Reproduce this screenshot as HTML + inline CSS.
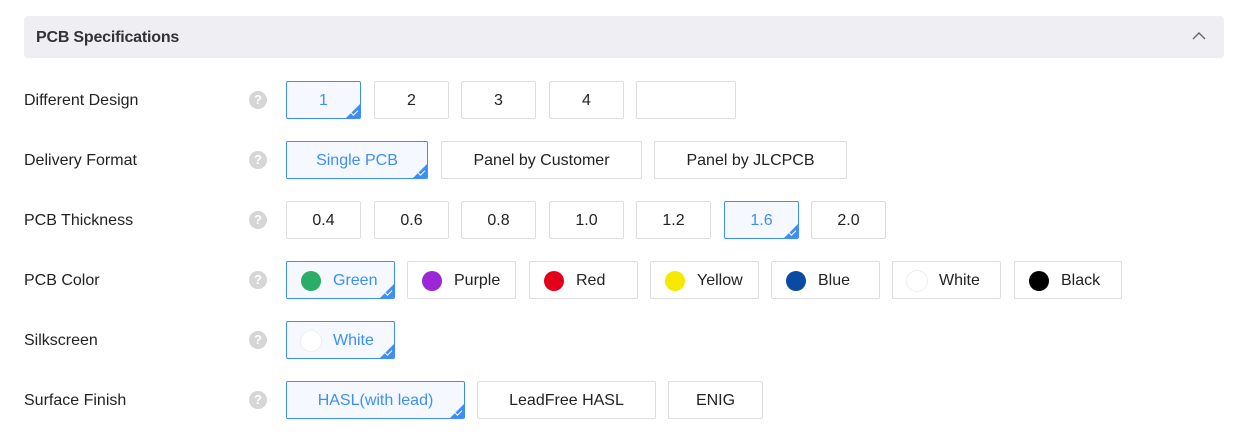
<!DOCTYPE html>
<html><head><meta charset="utf-8"><style>
body{margin:0;width:1246px;height:436px;background:#fff;font-family:"Liberation Sans",Arial,sans-serif;position:relative;overflow:hidden;color:#222}
.hd{position:absolute;left:24px;top:16px;width:1200px;height:42px;background:#eeeef3;border-radius:4px}
.hd span{position:absolute;left:12px;top:13px;font-size:16px;font-weight:bold;color:#333;letter-spacing:-0.2px}
.hd svg{position:absolute;right:18px;top:15px}
.lb{position:absolute;left:24px;font-size:16px;color:#222}
.q{position:absolute;left:249px;width:18px;height:18px;border-radius:50%;background:#d6d6d6;color:#fff;font-size:13px;font-weight:bold;text-align:center;line-height:18px}
.b{position:absolute;height:36px;border:1px solid #ddd;border-radius:2px;box-sizing:content-box;font-size:16px;line-height:38px;text-align:center;color:#222;background:#fff;overflow:hidden}
.b.s{border-color:#3d8ef8;color:#3d8ef8;background:#f5f9ff}
.b.s:after{content:"";position:absolute;right:0;bottom:0;border-style:solid;border-width:0 0 14px 14px;border-color:transparent transparent #3d8ef8 transparent}
.b.s:before{content:"";position:absolute;right:2px;bottom:4px;width:6px;height:3px;border-left:1.5px solid #fff;border-bottom:1.5px solid #fff;transform:rotate(-45deg);z-index:2}
.d{position:absolute;left:14px;top:9px;width:20px;height:20px;border-radius:50%}
.c{position:absolute;left:46px;top:0}
</style></head><body>
<div class="hd"><span>PCB Specifications</span><svg width="14" height="10" viewBox="0 0 14 10"><path d="M1 8 L7 2 L13 8" fill="none" stroke="#666" stroke-width="1.4"/></svg></div>

<div class="lb" style="top:92px">Different Design</div><div class="q" style="top:91px">?</div>
<div class="b s" style="left:286px;top:81px;width:73px">1</div>
<div class="b" style="left:374px;top:81px;width:73px">2</div>
<div class="b" style="left:461px;top:81px;width:73px">3</div>
<div class="b" style="left:549px;top:81px;width:73px">4</div>
<div class="b" style="left:636px;top:81px;width:98px"></div>

<div class="lb" style="top:152px">Delivery Format</div><div class="q" style="top:151px">?</div>
<div class="b s" style="left:286px;top:141px;width:140px">Single PCB</div>
<div class="b" style="left:441px;top:141px;width:199px">Panel by Customer</div>
<div class="b" style="left:654px;top:141px;width:191px">Panel by JLCPCB</div>

<div class="lb" style="top:212px">PCB Thickness</div><div class="q" style="top:211px">?</div>
<div class="b" style="left:286px;top:201px;width:73px">0.4</div>
<div class="b" style="left:374px;top:201px;width:73px">0.6</div>
<div class="b" style="left:461px;top:201px;width:73px">0.8</div>
<div class="b" style="left:549px;top:201px;width:73px">1.0</div>
<div class="b" style="left:636px;top:201px;width:73px">1.2</div>
<div class="b s" style="left:724px;top:201px;width:73px">1.6</div>
<div class="b" style="left:811px;top:201px;width:73px">2.0</div>

<div class="lb" style="top:272px">PCB Color</div><div class="q" style="top:271px">?</div>
<div class="b s" style="left:286px;top:261px;width:107px"><i class="d" style="background:#2aae67"></i><span class="c">Green</span></div>
<div class="b" style="left:407px;top:261px;width:107px"><i class="d" style="background:#9b27d8"></i><span class="c">Purple</span></div>
<div class="b" style="left:529px;top:261px;width:107px"><i class="d" style="background:#e3001b"></i><span class="c">Red</span></div>
<div class="b" style="left:650px;top:261px;width:107px"><i class="d" style="background:#f8e800"></i><span class="c">Yellow</span></div>
<div class="b" style="left:771px;top:261px;width:107px"><i class="d" style="background:#0a4aa3"></i><span class="c">Blue</span></div>
<div class="b" style="left:892px;top:261px;width:107px"><i class="d" style="background:#fff;border:1px solid #eee;top:8px;left:13px"></i><span class="c">White</span></div>
<div class="b" style="left:1014px;top:261px;width:106px"><i class="d" style="background:#000"></i><span class="c">Black</span></div>

<div class="lb" style="top:332px">Silkscreen</div><div class="q" style="top:331px">?</div>
<div class="b s" style="left:286px;top:321px;width:107px"><i class="d" style="background:#fff;border:1px solid #eee;top:8px;left:13px"></i><span class="c">White</span></div>

<div class="lb" style="top:392px">Surface Finish</div><div class="q" style="top:391px">?</div>
<div class="b s" style="left:286px;top:381px;width:177px">HASL(with lead)</div>
<div class="b" style="left:477px;top:381px;width:177px">LeadFree HASL</div>
<div class="b" style="left:668px;top:381px;width:93px">ENIG</div>
</body></html>
